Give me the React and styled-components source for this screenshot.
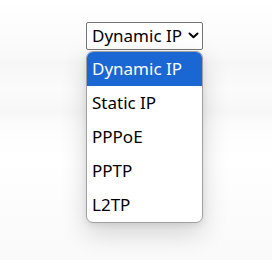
import React from "react";
import styled, { createGlobalStyle } from "styled-components";

const Global = createGlobalStyle`
  html, body { margin: 0; padding: 0; }
  body {
    background: #ffffff;
    font-family: "Noto Sans", "Open Sans", "Liberation Sans", sans-serif;
  }
`;

const Stage = styled.div`
  width: 272px;
  height: 260px;
  box-sizing: border-box;
  padding: 22px 0 0 86px;
  display: flex;
  flex-direction: column;
  align-items: flex-start;
  background:
    linear-gradient(180deg,
      rgba(255,255,255,0) 0px,
      rgba(0,0,0,0.025) 56px,
      rgba(0,0,0,0.035) 62px,
      rgba(0,0,0,0.015) 90px,
      rgba(0,0,0,0.03) 112px,
      rgba(0,0,0,0.01) 125px,
      rgba(255,255,255,0) 160px,
      rgba(0,0,0,0.02) 240px);
`;

const Wrap = styled.div`
  display: flex;
  flex-direction: column;
  width: 117px;
`;

const SelectBox = styled.div`
  box-sizing: border-box;
  height: 28px;
  border: 1px solid #767676;
  border-radius: 2px;
  background: #fff;
  display: flex;
  align-items: center;
  justify-content: space-between;
  padding: 0 3px 1px 5px;
  font-size: 17px;
  color: #000;
  white-space: nowrap;
`;

const Menu = styled.div`
  margin-top: 1px;
  box-sizing: border-box;
  border: 1px solid #a0a0a0;
  border-radius: 7px;
  background: #fff;
  overflow: hidden;
  box-shadow: 0 10px 26px rgba(0, 0, 0, 0.16), 0 2px 6px rgba(0, 0, 0, 0.08);
`;

const Option = styled.div`
  height: 34px;
  display: flex;
  align-items: center;
  padding: 0 0 1px 5px;
  box-sizing: border-box;
  font-size: 17px;
  white-space: nowrap;
  color: ${(p) => (p.$active ? "#ffffff" : "#000000")};
  background: ${(p) => (p.$active ? "#1a66d2" : "transparent")};
`;

const Chevron = () => (
  <svg width="11" height="7" viewBox="0 0 11 7">
    <path d="M1.5 1.5 L5.5 5.2 L9.5 1.5" fill="none" stroke="#000" strokeWidth="2" strokeLinecap="round" strokeLinejoin="round" />
  </svg>
);

const options = ["Dynamic IP", "Static IP", "PPPoE", "PPTP", "L2TP"];

export default function App() {
  return (
    <>
      <Global />
      <Stage>
        <Wrap>
          <SelectBox>
            <span>Dynamic IP</span>
            <Chevron />
          </SelectBox>
          <Menu>
            {options.map((o, i) => (
              <Option key={o} $active={i === 0}>{o}</Option>
            ))}
          </Menu>
        </Wrap>
      </Stage>
    </>
  );
}
